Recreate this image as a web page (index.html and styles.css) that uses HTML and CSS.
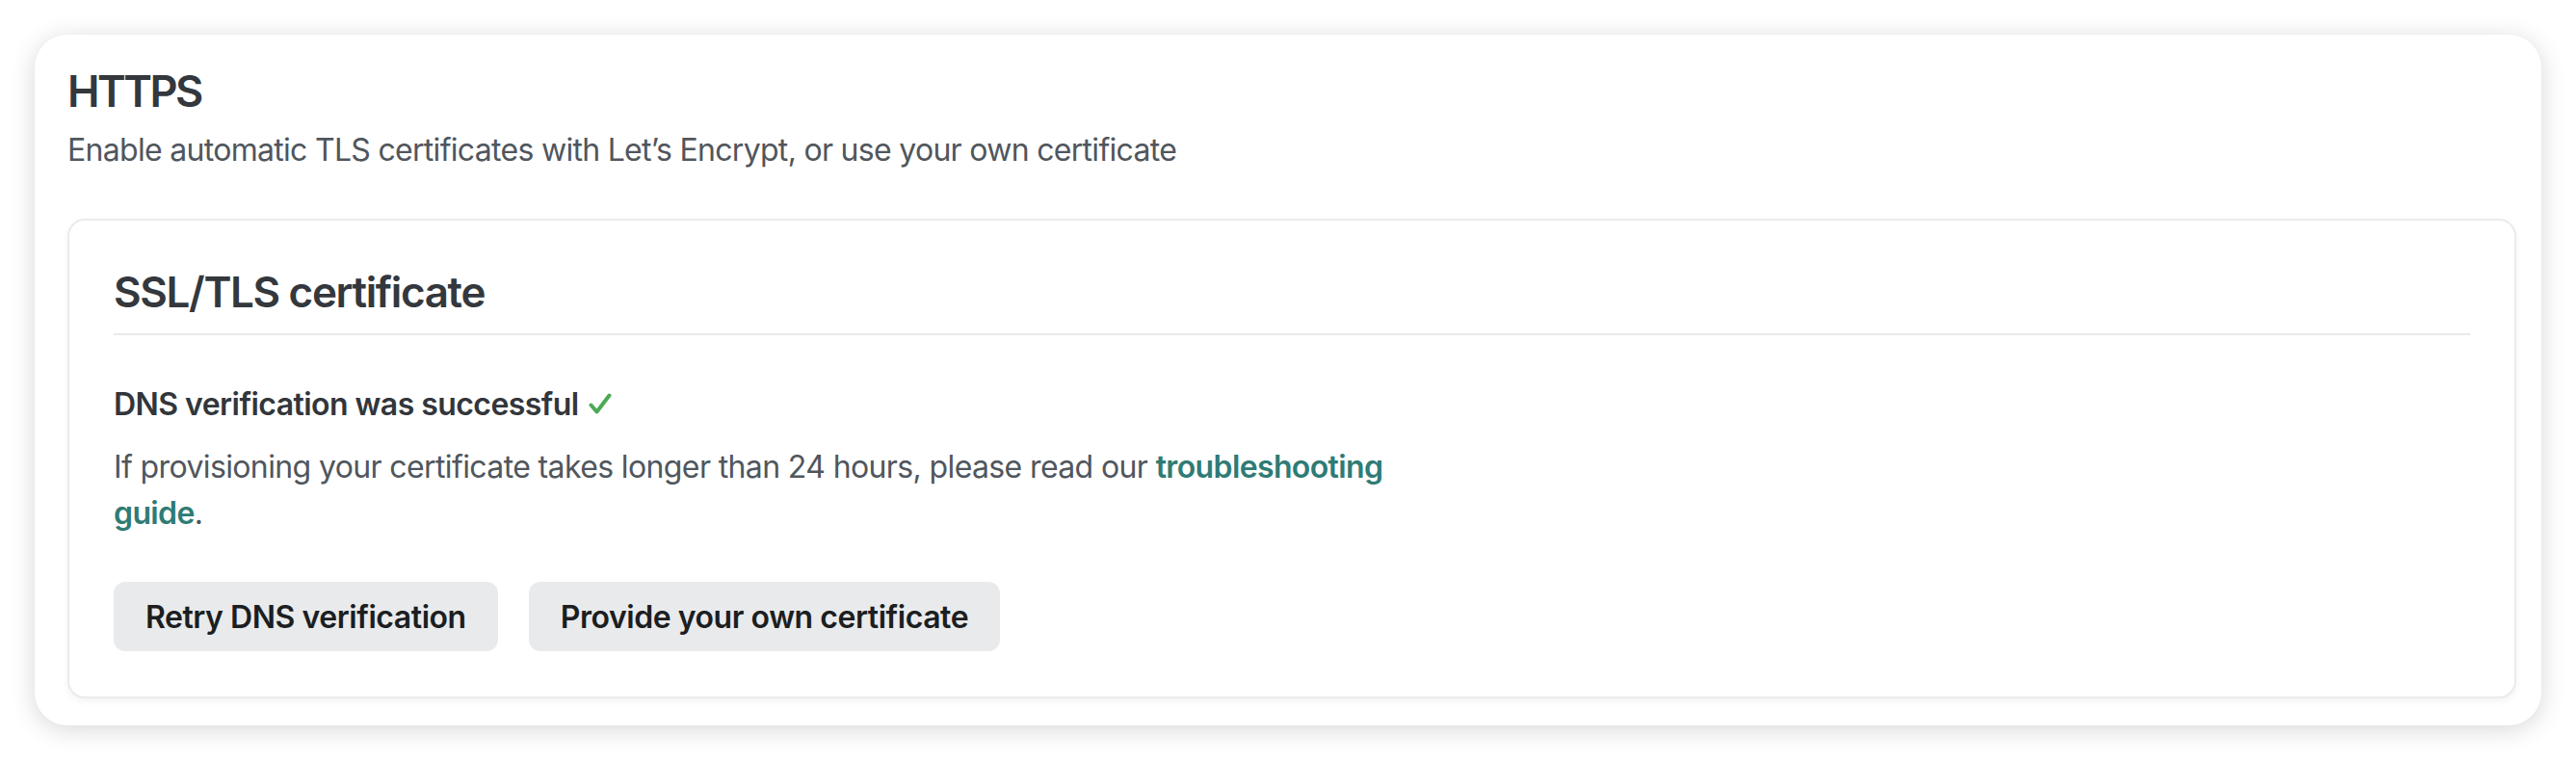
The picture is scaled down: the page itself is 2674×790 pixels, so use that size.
FILE: index.html
```html
<!DOCTYPE html>
<html lang="en">
<head>
<meta charset="utf-8">
<title>HTTPS</title>
<link rel="stylesheet" href="styles.css">
</head>
<body>
<div class="page">
  <section class="panel">
    <h1 class="panel-title">HTTPS</h1>
    <p class="panel-desc">Enable automatic TLS certificates with Let’s Encrypt, or use your own certificate</p>
    <div class="card">
      <h2 class="card-title">SSL/TLS certificate</h2>
      <div class="card-body">
        <p class="status">DNS verification was successful <svg class="check" viewBox="0 0 24 22" width="24" height="22" aria-hidden="true"><path d="M2.5 12.5 L8.5 19.5 L21.5 2.5" fill="none" stroke="#4caa55" stroke-width="4" stroke-linecap="round" stroke-linejoin="round"/></svg></p>
        <p class="info">If provisioning your certificate takes longer than 24 hours, please read our <a class="link" href="#">troubleshooting guide</a>.</p>
        <div class="actions">
          <button class="btn" type="button">Retry DNS verification</button>
          <button class="btn" type="button">Provide your own certificate</button>
        </div>
      </div>
    </div>
  </section>
</div>
</body>
</html>
```

FILE: styles.css
```css
html, body {
  margin: 0;
  padding: 0;
  background: #ffffff;
}

body {
  font-family: Inter, "Liberation Sans", Arial, sans-serif;
  color: #34383d;
}

.page {
  padding: 36px 36px 37px 36px;
}

.panel {
  background: #ffffff;
  border-radius: 34px;
  box-shadow: 0 4px 26px rgba(0, 0, 0, 0.16);
  padding: 31px 26px 28px 34px;
}

.panel-title {
  margin: 0;
  font-size: 45px;
  line-height: 56px;
  font-weight: 600;
  letter-spacing: -2.5px;
  color: #34383d;
}

.panel-desc {
  margin: 9px 0 0 0;
  font-size: 32px;
  line-height: 48px;
  font-weight: 400;
  letter-spacing: -0.7px;
  color: #50565d;
}

.card {
  margin-top: 47px;
  border: 2px solid #ebebeb;
  border-radius: 18px;
  background: #ffffff;
  box-shadow: 0 3px 8px rgba(0, 0, 0, 0.05);
  padding: 48px 46px 47px 46px;
}

.card-title {
  margin: 0;
  font-size: 44px;
  line-height: 52px;
  font-weight: 600;
  letter-spacing: -1.35px;
  color: #34383d;
  padding-bottom: 17px;
  border-bottom: 2px solid #e9e9e9;
}

.card-body {
  padding-top: 48px;
}

.status {
  margin: 0;
  font-size: 32px;
  line-height: 48px;
  font-weight: 600;
  letter-spacing: -0.55px;
  color: #32363b;
  display: flex;
  align-items: center;
  gap: 10px;
}

.check {
  display: block;
  margin-top: -2px;
}

.info {
  margin: 17px 0 0 0;
  max-width: 1380px;
  font-size: 32px;
  line-height: 48px;
  letter-spacing: -0.62px;
  color: #50565d;
}

.link {
  color: #2f7b75;
  font-weight: 600;
  text-decoration: none;
}

.actions {
  display: flex;
  gap: 32px;
  margin-top: 47px;
}

.btn {
  font-family: inherit;
  height: 72px;
  padding: 0 33px;
  border: none;
  border-radius: 12px;
  background: #e9eaec;
  color: #1c1e21;
  font-size: 32px;
  font-weight: 600;
  letter-spacing: -0.45px;
}
```
